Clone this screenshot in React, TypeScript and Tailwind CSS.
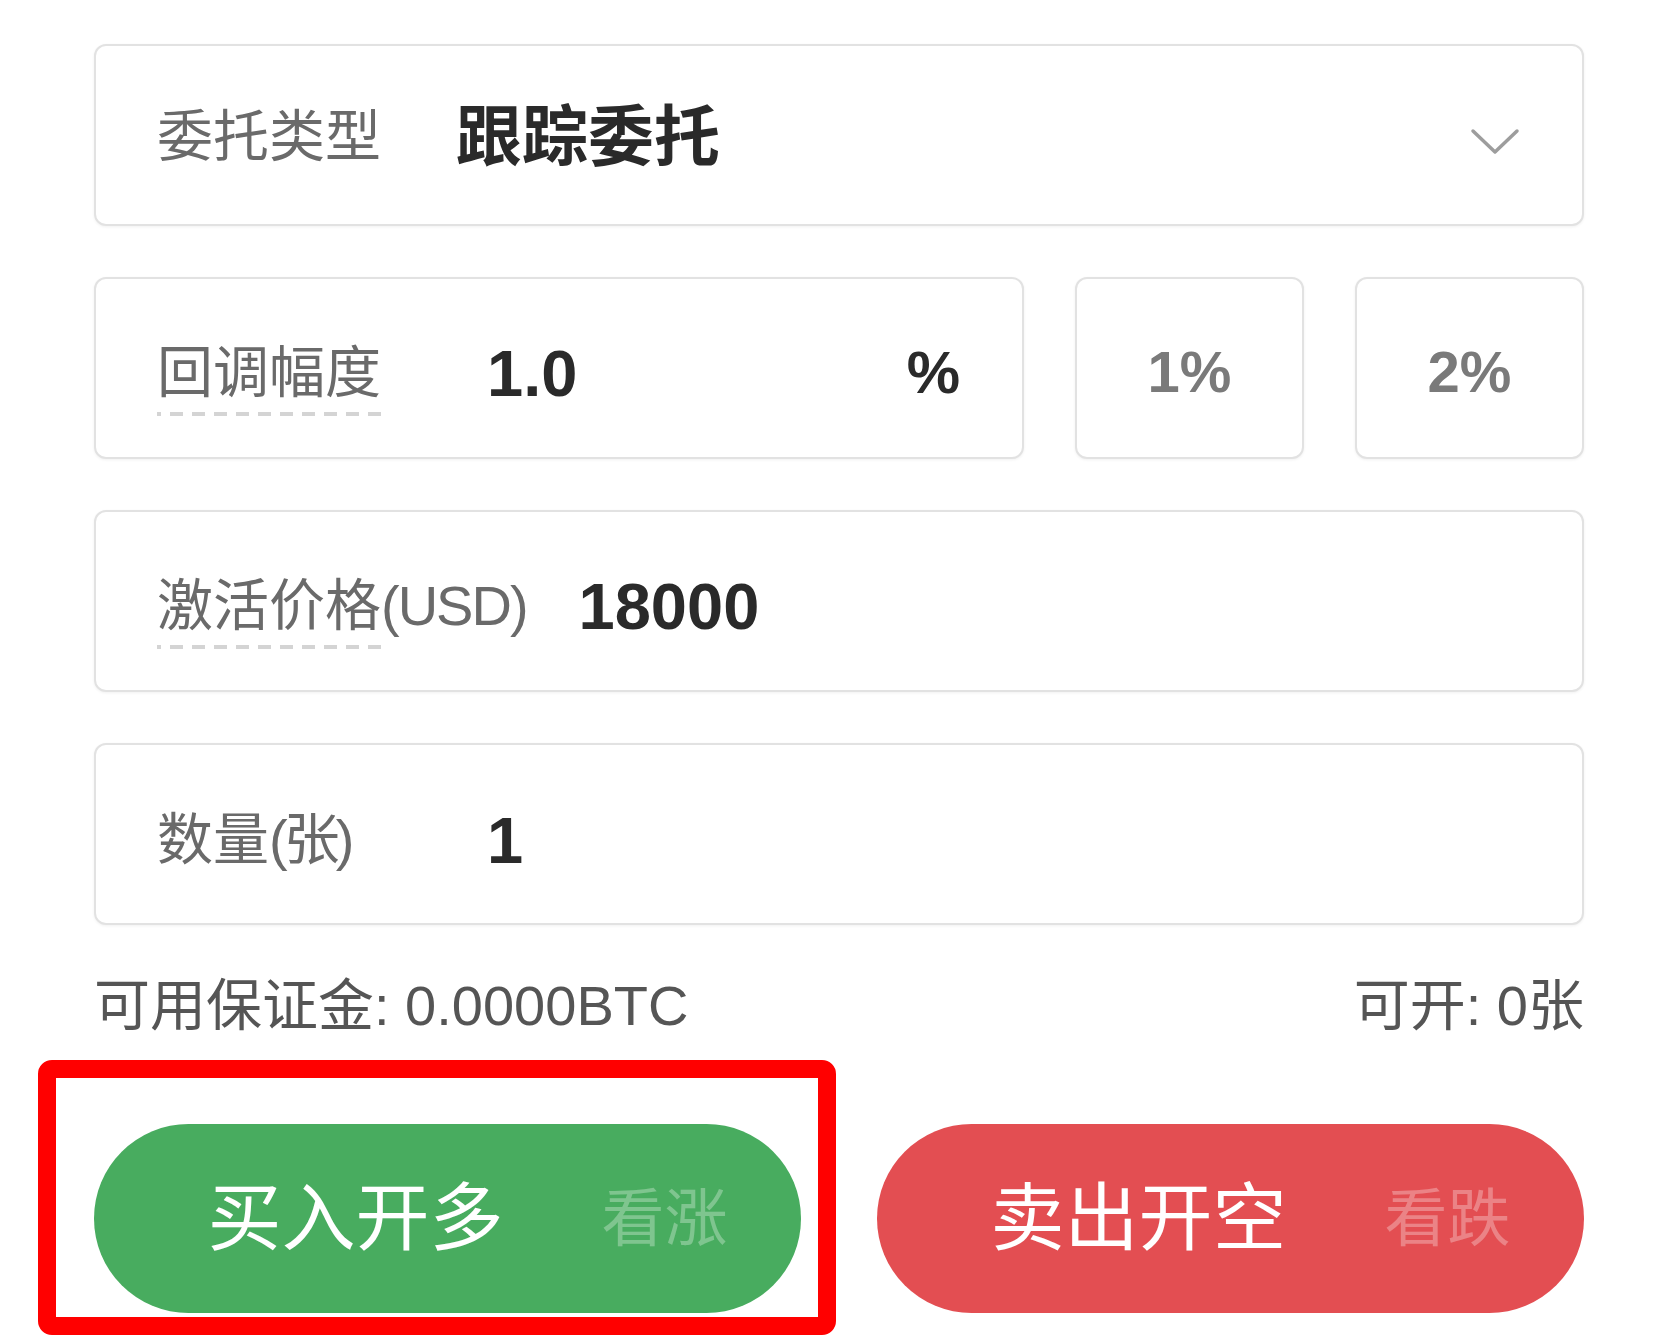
import React from "react";

const FONT = { fontFamily: '"Liberation Sans", "Noto Sans CJK SC", sans-serif' };

function Box({ children, className = "" }: { children: React.ReactNode; className?: string }) {
  return (
    <div
      className={
        "flex items-center h-[182px] rounded-xl border-2 border-[#e2e2e2] bg-white shadow-[0_1px_3px_rgba(0,0,0,0.06)] " +
        className
      }
    >
      {children}
    </div>
  );
}

function Dashed({ children }: { children: React.ReactNode }) {
  return (
    <span className="inline-block pb-[15px] -mb-[15px] bg-[linear-gradient(to_right,#d4d4d4_0_13px,transparent_13px_22px)] bg-[length:22px_4px] bg-repeat-x bg-bottom">
      {children}
    </span>
  );
}

export default function App() {
  return (
    <div className="w-[1660px] h-[1340px] bg-white pl-[94px] pt-[44px] overflow-hidden" style={FONT}>
      <div className="w-[1490px] flex flex-col">
        <div className="flex flex-col gap-[51px]">
          {/* 委托类型 */}
          <Box className="pl-[61px] pr-[62px] pt-[4px]">
            <div className="text-[56px] leading-none text-[#6a6a6a]">委托类型</div>
            <div className="ml-[75px] text-[66px] leading-none font-bold text-[#2a2a2a]">跟踪委托</div>
            <div className="flex-1" />
            <svg width="50" height="30" viewBox="0 0 50 30" className="mt-[10px]">
              <polyline
                points="3,4 25,25 47,4"
                fill="none"
                stroke="#9d9d9d"
                strokeWidth="3.5"
                strokeLinecap="round"
                strokeLinejoin="round"
              />
            </svg>
          </Box>

          {/* 回调幅度 */}
          <div className="flex gap-[51px]">
            <Box className="flex-1 pl-[61px] pr-[62px] pt-[10px]">
              <div className="min-w-[278px] text-[56px] leading-none text-[#6a6a6a]">
                <Dashed>回调幅度</Dashed>
              </div>
              <div className="ml-[52px] text-[65px] leading-none font-bold text-[#2a2a2a]">1.0</div>
              <div className="flex-1" />
              <div className="text-[60px] leading-none font-bold text-[#2a2a2a]">%</div>
            </Box>
            <Box className="w-[229px] justify-center pt-[8px]">
              <div className="text-[58px] leading-none font-bold text-[#7a7a7a]">1%</div>
            </Box>
            <Box className="w-[229px] justify-center pt-[8px]">
              <div className="text-[58px] leading-none font-bold text-[#7a7a7a]">2%</div>
            </Box>
          </div>

          {/* 激活价格 */}
          <Box className="pl-[61px] pr-[62px] pt-[10px]">
            <div className="min-w-[278px] text-[56px] leading-none text-[#6a6a6a] whitespace-nowrap">
              <Dashed>激活价格</Dashed>
              <span className="tracking-[-2px]">(USD)</span>
            </div>
            <div className="ml-[52px] text-[65px] leading-none font-bold text-[#2a2a2a]">18000</div>
          </Box>

          {/* 数量 */}
          <Box className="pl-[61px] pr-[62px] pt-[12px]">
            <div className="min-w-[278px] text-[56px] leading-none text-[#6a6a6a] whitespace-nowrap">
              数量<span className="tracking-[-4px]">(张)</span>
            </div>
            <div className="ml-[52px] text-[65px] leading-none font-bold text-[#2a2a2a]">1</div>
          </Box>
        </div>

        {/* info row */}
        <div className="mt-[41px] h-[80px] flex items-center justify-between text-[56px] leading-none text-[#555555]">
          <span>可用保证金: 0.0000BTC</span>
          <span>可开: 0张</span>
        </div>

        {/* buttons */}
        <div className="relative mt-[78px] flex gap-[76px]">
          <button className="flex-1 h-[189px] rounded-full bg-[#48ac5f] flex items-center justify-center gap-[98px] pl-[40px]">
            <span className="text-[74px] leading-none text-white">买入开多</span>
            <span className="text-[63px] leading-none text-white/30">看涨</span>
          </button>
          <button className="flex-1 h-[189px] rounded-full bg-[#e34e52] flex items-center justify-center gap-[98px] pl-[40px]">
            <span className="text-[74px] leading-none text-white">卖出开空</span>
            <span className="text-[63px] leading-none text-white/30">看跌</span>
          </button>
          <div className="absolute left-[-56px] top-[-64px] w-[798px] h-[275px] border-[18px] border-[#ff0000] rounded-[14px] pointer-events-none" />
        </div>
      </div>
    </div>
  );
}
